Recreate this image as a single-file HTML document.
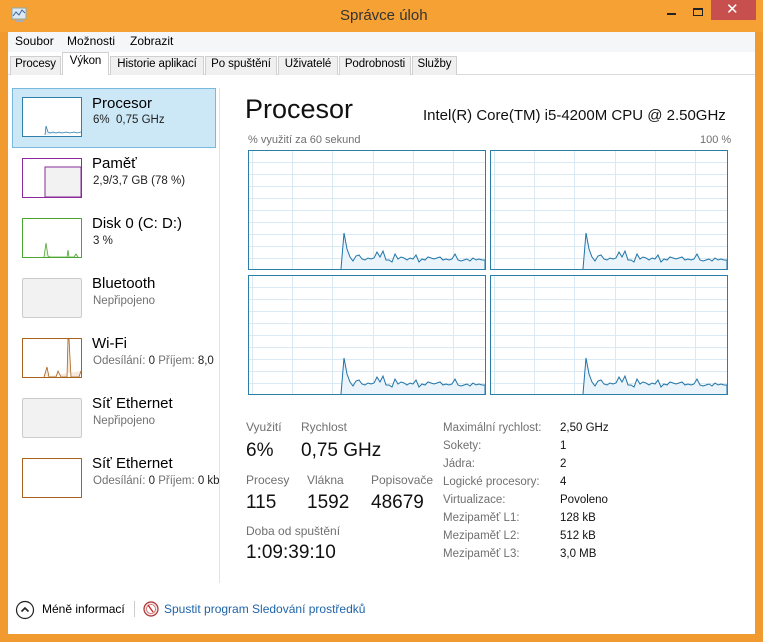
<!DOCTYPE html>
<html><head><meta charset="utf-8"><style>
*{margin:0;padding:0;box-sizing:border-box}
body{width:763px;height:642px;background:#f09a30;font-family:"Segoe UI","Liberation Sans",sans-serif;position:relative;overflow:hidden;color:#000}
.abs{position:absolute}
.t{position:absolute;white-space:nowrap}
.title{left:0;top:0;width:763px;height:32px;background:#f6a134}
.menu{left:8px;top:32px;width:747px;height:20px;background:#f4f6f8;font-size:12px}
.tabs{left:8px;top:52px;width:747px;height:23px;background:#fff;border-bottom:1px solid #d9d9d9}
.tab{position:absolute;top:56px;height:19px;background:#f0f0f0;border:1px solid #d0d0d0;border-bottom:none;font-size:11.5px;padding:1px 0 0 0;text-align:center;white-space:nowrap;overflow:hidden;letter-spacing:-0.1px}
.content{left:8px;top:75px;width:747px;height:559px;background:#fff}
.sel{left:12px;top:88px;width:204px;height:60px;background:#cce8f7;border:1px solid #7ab9df}
.n{font-size:15px;left:92px}
.s{font-size:11.5px;left:93px;color:#222}
.g{color:#707070}
.lbl{font-size:12px;color:#707070}
.big{font-size:19px;color:#111}
.k{font-size:11.5px;color:#707070;left:443px}
.v{font-size:11.5px;color:#111;left:560px}
</style></head><body>
<div class="abs title"></div>
<svg class="abs" style="left:10px;top:6px" width="18" height="18"><rect x="2" y="2" width="14" height="11" fill="#dfe8f0" stroke="#8aa" /><polyline points="3,10 6,6 9,9 12,4 15,7" fill="none" stroke="#36a" stroke-width="1"/><rect x="5" y="14" width="8" height="2" fill="#aab"/></svg>
<div class="t" style="left:340px;top:7px;font-size:15px;color:#333">Správce úloh</div>
<div class="abs" style="left:667px;top:13px;width:9px;height:2px;background:#222"></div>
<div class="abs" style="left:693px;top:8px;width:10px;height:8px;border:1px solid #222;border-top-width:2px"></div>
<div class="abs" style="left:711px;top:0;width:45px;height:20px;background:#c7504e"></div>
<div class="t" style="left:726px;top:0px;font-size:15px;color:#fff">✕</div>
<div class="abs menu"><span class="t" style="left:7px;top:2px">Soubor</span><span class="t" style="left:59px;top:2px">Možnosti</span><span class="t" style="left:122px;top:2px">Zobrazit</span></div>
<div class="abs tabs"></div>
<div class="tab" style="left:10px;width:51px">Procesy</div>
<div class="tab" style="left:62px;top:52px;height:24px;width:47px;background:#fff;padding-top:2px;border-bottom:1px solid #fff">Výkon</div>
<div class="tab" style="left:110px;width:94px">Historie aplikací</div>
<div class="tab" style="left:205px;width:72px">Po spuštění</div>
<div class="tab" style="left:278px;width:60px">Uživatelé</div>
<div class="tab" style="left:339px;width:72px">Podrobnosti</div>
<div class="tab" style="left:412px;width:45px">Služby</div>
<div class="abs content"></div>
<div class="abs" style="left:219px;top:88px;width:1px;height:495px;background:#e3e3e3"></div>
<div class="abs sel"></div>
<svg class="abs" style="left:22px;top:97px" width="60" height="40"><rect x=".5" y=".5" width="59" height="39" fill="#fff" stroke="#2f7fa8"/><polyline points="23,38 24,29 26,35 28,36 31,35 34,36 37,35 40,36 44,35 48,36 52,35 55,36 59,35" fill="#e5f1f8" stroke="#2f7fa8" stroke-width=".8"/></svg>
<div class="t n" style="top:95px">Procesor</div><div class="t s" style="top:114px">6%&nbsp; 0,75 GHz</div>
<svg class="abs" style="left:22px;top:158px" width="60" height="40"><rect x=".5" y=".5" width="59" height="39" fill="#fff" stroke="#8b2a9b"/><rect x="23" y="9" width="36" height="30" fill="#f2f2f2" stroke="#8b2a9b"/></svg>
<div class="t n" style="top:155px">Paměť</div><div class="t s" style="top:175px">2,9/3,7 GB (78 %)</div>
<svg class="abs" style="left:22px;top:218px" width="60" height="40"><rect x=".5" y=".5" width="59" height="39" fill="#fff" stroke="#4da633"/><polyline points="22,39 24,25 26,38 28,39 45,39 46,32 47,39 52,39 54,36 56,39" fill="#e8f5e2" stroke="#4da633" stroke-width=".8"/></svg>
<div class="t n" style="top:215px">Disk 0 (C: D:)</div><div class="t s" style="top:235px">3 %</div>
<div class="abs" style="left:22px;top:278px;width:60px;height:40px;background:#f2f2f2;border:1px solid #ccc;border-radius:2px"></div>
<div class="t n" style="top:275px">Bluetooth</div><div class="t s g" style="top:295px">Nepřipojeno</div>
<svg class="abs" style="left:22px;top:338px" width="60" height="40"><rect x=".5" y=".5" width="59" height="39" fill="#fff" stroke="#a7621b"/><polyline points="22,39 25,29 27,39 34,39 36,33 39,39 45,39 46,1 47,1 49,39 57,39 59,33" fill="#f6e9dc" stroke="#a7621b" stroke-width=".8"/></svg>
<div class="t n" style="top:335px">Wi-Fi</div><div class="t s g" style="top:355px;width:123px;overflow:hidden">Odesílání: <span style="color:#222">0</span> Příjem: <span style="color:#222">8,0</span></div>
<div class="abs" style="left:22px;top:398px;width:60px;height:40px;background:#f2f2f2;border:1px solid #ccc;border-radius:2px"></div>
<div class="t n" style="top:395px">Síť Ethernet</div><div class="t s g" style="top:415px">Nepřipojeno</div>
<div class="abs" style="left:22px;top:458px;width:60px;height:40px;background:#fff;border:1px solid #a7621b"></div>
<div class="t n" style="top:455px">Síť Ethernet</div><div class="t s g" style="top:475px;width:126px;overflow:hidden">Odesílání: <span style="color:#222">0</span> Příjem: <span style="color:#222">0 kb</span></div>

<div class="t" style="left:245px;top:94px;font-size:27px;color:#111">Procesor</div>
<div class="t" style="left:423px;top:107px;font-size:15px;color:#111">Intel(R) Core(TM) i5-4200M CPU @ 2.50GHz</div>
<div class="t lbl" style="left:248px;top:134px;font-size:11px">% využití za 60 sekund</div>
<div class="t lbl" style="left:700px;top:134px;font-size:11px">100 %</div>
<svg class="abs" style="left:248px;top:150px" width="484" height="246">
<defs>
<g id="c">
<rect x=".5" y=".5" width="237" height="119" fill="#fff"/>
<g stroke="#d9eaf4" stroke-width="1">
<path d="M4.5 0V120M44.5 0V120M84.5 0V120M125.5 0V120M165.5 0V120M205.5 0V120"/>
<path d="M0 12.5H238M0 24.5H238M0 36.5H238M0 48.5H238M0 60.5H238M0 72.5H238M0 84.5H238M0 96.5H238M0 108.5H238"/>
</g>
<polyline points="93,119 96,83 99,99 102,107 105,111 108,106 111,105 114,109 117,110 120,108 123,109 126,108 129,102 132,107 135,101 138,110 141,110 144,112 147,104 150,109 153,107 156,108 159,110 162,108 165,109 168,105 171,112 174,109 177,110 180,107 183,108 186,109 189,108 192,107 195,110 198,109 201,110 204,109 207,104 210,110 213,111 216,110 219,109 222,111 225,108 228,110 231,109 234,110 237,110 237,119" fill="#eaf4fa" stroke="#1f74a8" stroke-width="1"/>
<rect x=".5" y=".5" width="237" height="119" fill="none" stroke="#2b7fa6"/>
</g></defs>
<use href="#c" x="0" y="0"/><use href="#c" x="242" y="0"/>
<use href="#c" x="0" y="125"/><use href="#c" x="242" y="125"/>
</svg>

<div class="t lbl" style="left:246px;top:420px">Využití</div>
<div class="t lbl" style="left:301px;top:420px">Rychlost</div>
<div class="t big" style="left:246px;top:440px">6%</div>
<div class="t big" style="left:301px;top:440px">0,75 GHz</div>
<div class="t lbl" style="left:246px;top:473px">Procesy</div>
<div class="t lbl" style="left:307px;top:473px">Vlákna</div>
<div class="t lbl" style="left:371px;top:473px">Popisovače</div>
<div class="t big" style="left:246px;top:492px">115</div>
<div class="t big" style="left:307px;top:492px">1592</div>
<div class="t big" style="left:371px;top:492px">48679</div>
<div class="t lbl" style="left:246px;top:524px">Doba od spuštění</div>
<div class="t big" style="left:246px;top:542px">1:09:39:10</div>

<div class="t k" style="top:422px">Maximální rychlost:</div><div class="t v" style="top:422px">2,50 GHz</div>
<div class="t k" style="top:440px">Sokety:</div><div class="t v" style="top:440px">1</div>
<div class="t k" style="top:458px">Jádra:</div><div class="t v" style="top:458px">2</div>
<div class="t k" style="top:476px">Logické procesory:</div><div class="t v" style="top:476px">4</div>
<div class="t k" style="top:494px">Virtualizace:</div><div class="t v" style="top:494px">Povoleno</div>
<div class="t k" style="top:512px">Mezipaměť L1:</div><div class="t v" style="top:512px">128 kB</div>
<div class="t k" style="top:530px">Mezipaměť L2:</div><div class="t v" style="top:530px">512 kB</div>
<div class="t k" style="top:548px">Mezipaměť L3:</div><div class="t v" style="top:548px">3,0 MB</div>

<svg class="abs" style="left:15px;top:600px" width="20" height="20"><circle cx="10" cy="10" r="8.5" fill="#fff" stroke="#222" stroke-width="1.2"/><polyline points="6.5,11.5 10,8 13.5,11.5" fill="none" stroke="#222" stroke-width="1.6"/></svg>
<div class="t" style="left:42px;top:602px;font-size:12px">Méně informací</div>
<div class="abs" style="left:134px;top:601px;width:1px;height:16px;background:#ccc"></div>
<svg class="abs" style="left:143px;top:601px" width="16" height="16"><circle cx="8" cy="8" r="7" fill="#f4e4e4" stroke="#a33" stroke-width="1.2"/><circle cx="8" cy="8" r="4.5" fill="#fff" stroke="#c66" stroke-width=".8"/><line x1="5" y1="4" x2="10" y2="11" stroke="#c22" stroke-width="1.3"/></svg>
<div class="t" style="left:164px;top:602px;font-size:12px;color:#1e64a8">Spustit program Sledování prostředků</div>
</body></html>
